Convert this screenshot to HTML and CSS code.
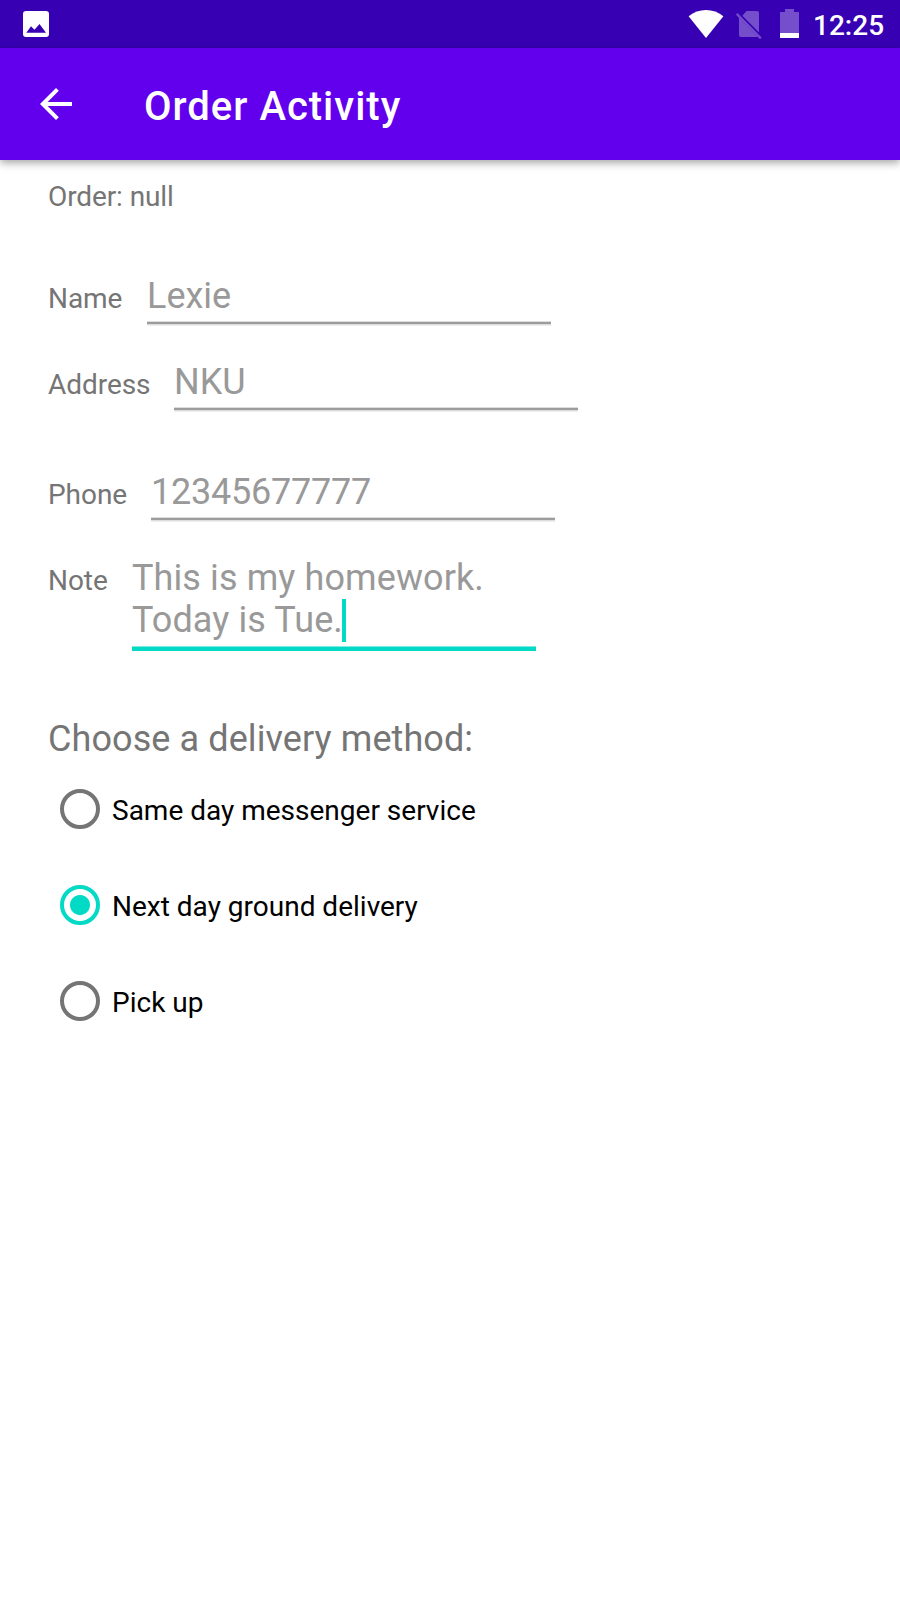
FILE: index.html
```html
<!DOCTYPE html>
<html lang="en">
<head>
<meta charset="utf-8">
<title>Order Activity</title>
<link rel="stylesheet" href="styles.css">
</head>
<body>
<div class="status-bar">
  <svg class="photo" width="26" height="26" viewBox="0 0 26 26"><path fill="#fff" fill-rule="evenodd" d="M3 0H23Q26 0 26 3V23Q26 26 23 26H3Q0 26 0 23V3Q0 0 3 0ZM3.3 21.700H23L16.500 13L11.500 18.800L8 15.200Z"/></svg>
  <svg class="wifi" width="36" height="28" viewBox="0 0 36 28"><path fill="#fff" d="M.6 6.2Q8.500 0 18 0T35.400 6.200L18 28Z"/></svg>
  <svg class="sim" width="26" height="28" viewBox="0 0 26 28"><g fill="#754fcb"><path d="M10.500 0H21Q23 0 23 2V21.600L6.400 4.700ZM3 6.500 22 26H5Q3 26 3 24Z"/><path d="M1.500 2 25.600 26.600 24 28.200 0 3.800Z"/></g></svg>
  <svg class="battery" width="19" height="29" viewBox="0 0 19 29"><path fill="#754fcb" d="M5 0H14V3H19V24H0V3H5Z"/><path fill="#fff" d="M0 24H19V29H0Z"/></svg>
  <span class="clock">12:25</span>
</div>
<header class="app-bar">
  <svg class="back" width="32" height="32" viewBox="0 0 32 32"><path fill="#fff" d="M32 14H7.660L18.840 2.820 16 0 0 16 16 32 18.820 29.180 7.660 18H32Z"/></svg>
  <h1 class="title">Order Activity</h1>
</header>
<main class="content">
  <p class="order">Order: null</p>
  <div class="row"><span class="label name">Name</span><span class="field">Lexie</span></div>
  <div class="row tall"><span class="label address">Address</span><span class="field">NKU</span></div>
  <div class="row"><span class="label phone">Phone</span><span class="field digits">12345677777</span></div>
  <div class="row note-row"><span class="label note">Note</span><span class="field focused">This is my homework.<br>Today is Tue.<i class="cursor"></i></span></div>
  <h2 class="question">Choose a delivery method:</h2>
  <div class="options">
    <div class="option"><span class="radio"></span><span class="choice">Same day messenger service</span></div>
    <div class="option"><span class="radio checked"></span><span class="choice">Next day ground delivery</span></div>
    <div class="option"><span class="radio"></span><span class="choice">Pick up</span></div>
  </div>
</main>
</body>
</html>
```
FILE: styles.css
```css
* { box-sizing: border-box; }
body {
  margin: 0;
  height: 1600px;
  background: #fff;
  font: 28px/33px Roboto, sans-serif;
  color: #757575;
  overflow: hidden;
}
.status-bar {
  display: flex;
  align-items: flex-start;
  height: 48px;
  padding-left: 23px;
  background: #3700b3;
}
.photo { margin-top: 11px; }
.wifi { margin: 10px 0 0 639px; }
.sim { margin: 11px 0 0 12px; }
.battery { margin: 9px 0 0 18px; }
.clock { margin: 9px 0 0 14px; font-weight: 500; color: #fff; }
.app-bar {
  display: flex;
  align-items: flex-start;
  height: 112px;
  padding-left: 40px;
  background: #6200ee;
  box-shadow: 0 3px 8px rgba(0, 0, 0, .35);
}
.back { margin-top: 40px; }
.title { margin: 35px 0 0 72px; font-size: 40px; line-height: 47px; font-weight: 500; letter-spacing: 1px; color: #fff; }
.content { padding: 20px 48px; }
.order { margin: 0 0 62px; letter-spacing: -.1px; }
.row { display: flex; align-items: baseline; height: 86px; }
.tall { height: 110px; }
.note-row { height: 161px; }
.label { flex: none; letter-spacing: -.05px; }
.name { width: 99px; }
.address { width: 126px; }
.phone { width: 103px; }
.note { width: 84px; }
.field {
  width: 404px;
  padding-bottom: 9px;
  font-size: 36px;
  line-height: 42px;
  color: #999;
  background: linear-gradient(#ddd 1px, #9c9c9c 1px 3px, #ddd 3px 4px, #eee 4px) bottom / 100% 5px no-repeat;
}
.digits { letter-spacing: -.23px; }
.focused { letter-spacing: .1px; background: linear-gradient(#7debdf 1px, #03dac5 1px) bottom / 100% 5px no-repeat; }
.cursor { display: inline-block; width: 4px; height: 43px; vertical-align: -10px; margin: -10px 0; background: #03dac5; position: relative; top: -10px; left: -1px; }
.question { margin: 0; font-size: 36px; line-height: 42px; font-weight: 400; letter-spacing: .09px; }
.options { padding: 1px 0 0 12px; }
.option { display: flex; align-items: center; gap: 12px; height: 96px; color: #000; }
.choice { padding-top: 2px; }
.radio { width: 40px; height: 40px; border: 4px solid #757575; border-radius: 50%; }
.checked { border-color: #03dac5; background: radial-gradient(circle, #03dac5 9.500px, transparent 10.500px); }
```
